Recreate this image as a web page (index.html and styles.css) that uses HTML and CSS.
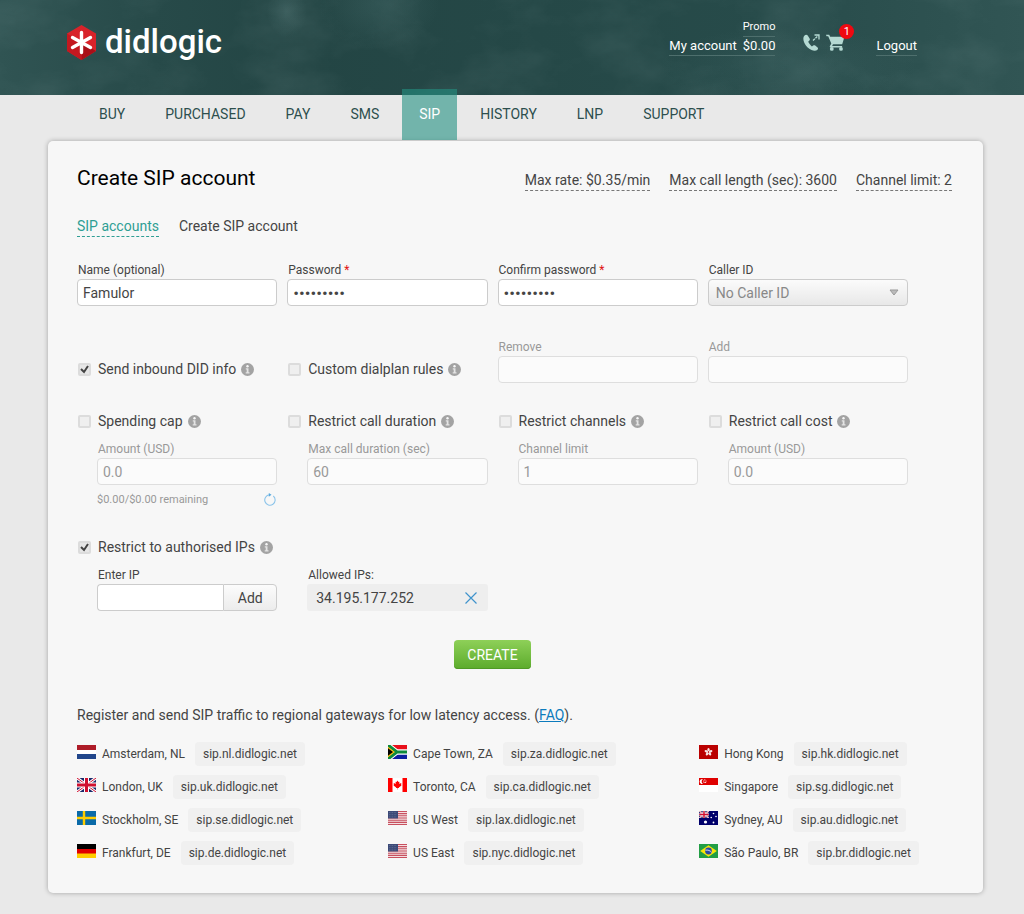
FILE: index.html
```html
<!DOCTYPE html>
<html lang="en">
<head>
    <meta charset="UTF-8">
    <meta name="viewport" content="width=device-width, initial-scale=1.0">
    <title>Create SIP account - didlogic</title>
    <link rel="stylesheet" href="styles.css">
</head>
<body>
    <!-- Shared icons -->
    <svg class="sprite" aria-hidden="true">
        <symbol id="info" viewBox="0 0 13 13">
            <circle cx="6.500" cy="6.500" r="6.500" fill="#a3a3a3"/>
            <circle cx="6.500" cy="3.200" r="1.200" fill="#f7f7f7"/>
            <path d="M4.800 5.300h2.700v4h1v1.200H4.700V9.300h1V6.500h-.9z" fill="#e4e4e4"/>
        </symbol>
        <symbol id="flag-uk" viewBox="0 0 19 14">
            <path d="M0 0h19v14H0z" fill="#1b2a6b"/>
            <path d="M0 0l19 14M19 0L0 14" stroke="#fff" stroke-width="3"/>
            <path d="M0 0l19 14M19 0L0 14" stroke="#d01030" stroke-width="1"/>
            <path d="M9.500 0v14M0 7h19" stroke="#fff" stroke-width="5"/>
            <path d="M9.500 0v14M0 7h19" stroke="#d01030" stroke-width="3"/>
        </symbol>
        <symbol id="flag-us" viewBox="0 0 19 14">
            <path d="M0 0h19v14H0z" fill="#f3dfe1"/>
            <path d="M0 .5h19M0 2.600h19M0 4.800h19M0 7h19M0 9.200h19M0 11.400h19M0 13.500h19" stroke="#c8505f" stroke-width="1.100"/>
            <path d="M0 0h10v7.500H0z" fill="#3c4a78"/>
            <path d="M1 1.500h8M1 3.700h8M1 5.900h8" stroke="#7d88aa" stroke-width=".6" stroke-dasharray=".8 .8"/>
        </symbol>
    </svg>

    <header class="header">
        <a href="#" class="logo">
            <svg width="31" height="35" viewBox="0 0 31 35" aria-hidden="true">
                <path d="M15.500 0L30 8.500v17.500L15.500 35 1 26V8.500z" fill="#d8232a"/>
                <path d="M1 8.500L15.500 17.500V35L1 26z" fill="#c31820"/>
                <path d="M30 26L15.500 17.500V35z" fill="#a90f18"/>
                <path d="M15.500 7.500v20M6.500 12.500l18 10M24.500 12.500l-18 10" stroke="#fff" stroke-width="3.400" stroke-linecap="round"/>
            </svg>
            <span>didlogic</span>
        </a>
        <div class="account">
            <a href="#" class="promo">Promo</a>
            <a href="#" class="balance"><span>My account</span> <span>$0.00</span></a>
        </div>
        <div class="header-icons">
            <a href="#" aria-label="Calls">
                <svg width="17" height="17" viewBox="0 0 17 17">
                    <path d="M1.300 1.700C0 3 0 6 1.400 9c1.500 3.100 4.100 5.700 7.100 7 2.300 1 4.600 1 6-.3.700-.7.700-1.500.1-2.100l-2.400-2.100c-.6-.5-1.400-.5-2 0l-1.300.9C7.500 11.300 6 9.700 5.200 7.800l1.200-1.200c.6-.6.600-1.400.2-2L4.700 1.600C3.900.4 2.400.6 1.300 1.700z" fill="#b5dad3"/>
                    <path d="M10 6.500l5.500-5" fill="none" stroke="#b5dad3" stroke-width="1.300" stroke-dasharray="2.500 .8"/>
                    <path d="M11.500 1H16v4.500" fill="none" stroke="#b5dad3" stroke-width="1.300"/>
                </svg>
            </a>
            <a href="#" class="cart" aria-label="Cart">
                <svg width="19" height="17" viewBox="0 0 19 17">
                    <path d="M0 .7h3.200l1 2H18.500l-2.300 7.500H7l-.9 1.700h10v1.500H4.200l-.5-1 1.600-2.900L2.200 2.200H.5z" fill="#b5dad3"/>
                    <circle cx="5.800" cy="14.900" r="1.900" fill="#b5dad3"/>
                    <circle cx="15" cy="14.900" r="1.900" fill="#b5dad3"/>
                </svg>
                <span class="badge">1</span>
            </a>
        </div>
        <a href="#" class="logout">Logout</a>
    </header>

    <nav class="nav">
        <a href="#">BUY</a>
        <a href="#">PURCHASED</a>
        <a href="#">PAY</a>
        <a href="#">SMS</a>
        <a href="#" class="active">SIP</a>
        <a href="#">HISTORY</a>
        <a href="#">LNP</a>
        <a href="#">SUPPORT</a>
    </nav>

    <main class="panel">
        <div class="panel-head">
            <h1>Create SIP account</h1>
            <div class="limits">
                <a href="#">Max rate: $0.35/min</a>
                <a href="#">Max call length (sec): 3600</a>
                <a href="#">Channel limit: 2</a>
            </div>
        </div>

        <div class="tabs">
            <a href="#">SIP accounts</a>
            <span>Create SIP account</span>
        </div>

        <form onsubmit="return false;">
            <!-- Account details -->
            <div class="row row-account">
                <div class="field">
                    <label for="name">Name (optional)</label>
                    <input type="text" id="name" value="Famulor">
                </div>
                <div class="field">
                    <label for="password">Password <span class="required">*</span></label>
                    <input type="password" id="password" value="123456789">
                </div>
                <div class="field">
                    <label for="confirm">Confirm password <span class="required">*</span></label>
                    <input type="password" id="confirm" value="123456789">
                </div>
                <div class="field">
                    <label for="caller">Caller ID</label>
                    <select id="caller"><option>No Caller ID</option></select>
                </div>
            </div>

            <!-- Dialplan -->
            <div class="row row-dialplan">
                <div class="check">
                    <input type="checkbox" id="did-info" checked>
                    <label for="did-info">Send inbound DID info</label>
                    <svg class="info"><use href="#info"/></svg>
                </div>
                <div class="check">
                    <input type="checkbox" id="dialplan">
                    <label for="dialplan">Custom dialplan rules</label>
                    <svg class="info"><use href="#info"/></svg>
                </div>
                <div class="field disabled">
                    <label for="remove">Remove</label>
                    <input type="text" id="remove" disabled>
                </div>
                <div class="field disabled">
                    <label for="add">Add</label>
                    <input type="text" id="add" disabled>
                </div>
            </div>

            <!-- Restrictions -->
            <div class="row row-limits">
                <div>
                    <div class="check">
                        <input type="checkbox" id="cap">
                        <label for="cap">Spending cap</label>
                        <svg class="info"><use href="#info"/></svg>
                    </div>
                    <div class="field indent disabled">
                        <label for="cap-amount">Amount (USD)</label>
                        <input type="text" id="cap-amount" value="0.0" disabled>
                    </div>
                    <div class="remaining">
                        <span>$0.00/$0.00 remaining</span>
                        <button type="button" class="icon-button" aria-label="Reset">
                            <svg width="13" height="13" viewBox="0 0 13 13">
                                <path d="M10.300 3A5.200 5.200 0 1 1 6.500 1.800" fill="none" stroke="#8cc4ea" stroke-width="1.100"/>
                                <path d="M5.800 0l2.700 1.800-2.700 2z" fill="#5aa9de"/>
                            </svg>
                        </button>
                    </div>
                </div>
                <div>
                    <div class="check">
                        <input type="checkbox" id="duration">
                        <label for="duration">Restrict call duration</label>
                        <svg class="info"><use href="#info"/></svg>
                    </div>
                    <div class="field indent disabled">
                        <label for="max-duration">Max call duration (sec)</label>
                        <input type="text" id="max-duration" value="60" disabled>
                    </div>
                </div>
                <div>
                    <div class="check">
                        <input type="checkbox" id="channels">
                        <label for="channels">Restrict channels</label>
                        <svg class="info"><use href="#info"/></svg>
                    </div>
                    <div class="field indent disabled">
                        <label for="channel-limit">Channel limit</label>
                        <input type="text" id="channel-limit" value="1" disabled>
                    </div>
                </div>
                <div>
                    <div class="check">
                        <input type="checkbox" id="cost">
                        <label for="cost">Restrict call cost</label>
                        <svg class="info"><use href="#info"/></svg>
                    </div>
                    <div class="field indent disabled">
                        <label for="cost-amount">Amount (USD)</label>
                        <input type="text" id="cost-amount" value="0.0" disabled>
                    </div>
                </div>
            </div>

            <!-- Authorised IPs -->
            <div class="check">
                <input type="checkbox" id="ips" checked>
                <label for="ips">Restrict to authorised IPs</label>
                <svg class="info"><use href="#info"/></svg>
            </div>
            <div class="row">
                <div class="field indent">
                    <label for="ip">Enter IP</label>
                    <div class="input-group">
                        <input type="text" id="ip">
                        <button type="button">Add</button>
                    </div>
                </div>
                <div class="field indent">
                    <span class="caption">Allowed IPs:</span>
                    <div class="ip">
                        <span>34.195.177.252</span>
                        <button type="button" class="icon-button" aria-label="Delete IP">
                            <svg width="12" height="12" viewBox="0 0 12 12">
                                <path d="M.5.5l11 11M11.500.5l-11 11" stroke="#3f93cc" stroke-width="1.200"/>
                            </svg>
                        </button>
                    </div>
                </div>
            </div>

            <button type="submit" class="create">CREATE</button>
        </form>

        <p class="note">Register and send SIP traffic to regional gateways for low latency access. (<a href="#">FAQ</a>).</p>

        <div class="gateways">
            <ul>
                <li>
                    <svg class="flag" viewBox="0 0 19 14"><path d="M0 0h19v14H0z" fill="#fff"/><path d="M0 0h19v5H0z" fill="#ae1c28"/><path d="M0 9h19v5H0z" fill="#21468b"/></svg>
                    Amsterdam, NL <span class="host">sip.nl.didlogic.net</span>
                </li>
                <li>
                    <svg class="flag"><use href="#flag-uk"/></svg>
                    London, UK <span class="host">sip.uk.didlogic.net</span>
                </li>
                <li>
                    <svg class="flag" viewBox="0 0 19 14"><path d="M0 0h19v14H0z" fill="#0a6aa8"/><path d="M7 0v14M0 7h19" stroke="#fecc00" stroke-width="2.400"/></svg>
                    Stockholm, SE <span class="host">sip.se.didlogic.net</span>
                </li>
                <li>
                    <svg class="flag" viewBox="0 0 19 14"><path d="M0 0h19v5H0z"/><path d="M0 5h19v5H0z" fill="#e00000"/><path d="M0 9.500h19V14H0z" fill="#ffce00"/></svg>
                    Frankfurt, DE <span class="host">sip.de.didlogic.net</span>
                </li>
            </ul>
            <ul>
                <li>
                    <svg class="flag" viewBox="0 0 19 14">
                        <path d="M0 0h19v14H0z" fill="#fff"/><path d="M3 0h16v4.500H9z" fill="#e8101a"/><path d="M3 14h16V9.500H9z" fill="#0b1fa0"/>
                        <path d="M0 0l9 7-9 7M9 7h10" fill="none" stroke="#fff" stroke-width="5"/>
                        <path d="M0 0l9 7-9 7M8 7h11" fill="none" stroke="#0c8a3c" stroke-width="3"/>
                        <path d="M0 1.800L6.800 7 0 12.200z" fill="#f5b800"/><path d="M0 3.200L5 7l-5 3.800z"/>
                    </svg>
                    Cape Town, ZA <span class="host">sip.za.didlogic.net</span>
                </li>
                <li>
                    <svg class="flag" viewBox="0 0 19 14">
                        <path d="M0 0h19v14H0z" fill="#fff"/><path d="M0 0h4.500v14H0zM14.500 0H19v14h-4.500z" fill="#f00"/>
                        <path d="M9.500 2.500l1 1.600 1-.3-.4 2.300 1-.8 1.400.2-.4 1.400.4.500-2.700 2 .2.700-1.300-.1v1.500h-.400V10l-1.300.1.200-.7-2.700-2 .4-.5-.4-1.400 1.400-.2 1 .8-.4-2.300 1 .3z" fill="#f00"/>
                    </svg>
                    Toronto, CA <span class="host">sip.ca.didlogic.net</span>
                </li>
                <li>
                    <svg class="flag"><use href="#flag-us"/></svg>
                    US West <span class="host">sip.lax.didlogic.net</span>
                </li>
                <li>
                    <svg class="flag"><use href="#flag-us"/></svg>
                    US East <span class="host">sip.nyc.didlogic.net</span>
                </li>
            </ul>
            <ul>
                <li>
                    <svg class="flag" viewBox="0 0 19 14">
                        <path d="M0 0h19v14H0z" fill="#ba0000"/>
                        <g fill="#fff" opacity=".9"><ellipse id="petal" cx="9.500" cy="4.800" rx="1.200" ry="1.900"/><use href="#petal" transform="rotate(72 9.500 7)"/><use href="#petal" transform="rotate(144 9.500 7)"/><use href="#petal" transform="rotate(216 9.500 7)"/><use href="#petal" transform="rotate(288 9.500 7)"/></g>
                        <circle cx="9.500" cy="7" r=".7" fill="#ba0000"/>
                    </svg>
                    Hong Kong <span class="host">sip.hk.didlogic.net</span>
                </li>
                <li>
                    <svg class="flag" viewBox="0 0 19 14">
                        <path d="M0 0h19v14H0z" fill="#fff"/><path d="M0 0h19v7H0z" fill="#df0000"/>
                        <path d="M4 1a2.600 2.600 0 1 0 0 5 3 3 0 0 1 0-5z" fill="#fff"/>
                        <g fill="#fff"><circle cx="5.800" cy="1.800" r=".6"/><circle cx="4.700" cy="3" r=".6"/><circle cx="7" cy="3" r=".6"/><circle cx="5.100" cy="4.500" r=".6"/><circle cx="6.600" cy="4.500" r=".6"/></g>
                    </svg>
                    Singapore <span class="host">sip.sg.didlogic.net</span>
                </li>
                <li>
                    <svg class="flag" viewBox="0 0 19 14">
                        <path d="M0 0h19v14H0z" fill="#00006b"/><use href="#flag-uk" width="10" height="7"/>
                        <g fill="#fff"><circle cx="6.500" cy="11" r="1.600"/><circle cx="14.500" cy="2.500" r=".8"/><circle cx="12.200" cy="6.500" r=".8"/><circle cx="17" cy="5.500" r=".8"/><circle cx="14.500" cy="11.500" r=".9"/></g>
                    </svg>
                    Sydney, AU <span class="host">sip.au.didlogic.net</span>
                </li>
                <li>
                    <svg class="flag" viewBox="0 0 19 14">
                        <path d="M0 0h19v14H0z" fill="#229e45"/><path d="M9.500 1.300L17.800 7l-8.300 5.700L1.200 7z" fill="#f8e509"/>
                        <circle cx="9.500" cy="7" r="3.400" fill="#2b49a3"/><path d="M6.400 6.200c2.400-.5 4.800.4 6.200 2.100" fill="none" stroke="#fff" stroke-width=".8"/>
                    </svg>
                    São Paulo, BR <span class="host">sip.br.didlogic.net</span>
                </li>
            </ul>
        </div>
    </main>
</body>
</html>
```
FILE: styles.css
```css
* {
    box-sizing: border-box;
}
body {
    margin: 0;
    padding-bottom: 21px;
    background-color: #e9e9e9;
    color: #444;
    font-family: Roboto, Arial, sans-serif;
    font-size: 14px;
    line-height: 20px;
}
a {
    color: inherit;
    text-decoration: none;
}
input, select, button {
    font-family: inherit;
    font-size: 14px;
    color: #444;
}
button {
    cursor: pointer;
}
.sprite {
    position: absolute;
    width: 0;
    height: 0;
}

/* Header */
.header {
    display: flex;
    align-items: flex-start;
    height: 95px;
    padding: 18px 107px 0 66px;
    /* chalkboard: fine noise over a few smudges */
    background:
        url("data:image/svg+xml,%3Csvg xmlns='http://www.w3.org/2000/svg' width='1024' height='95'%3E%3Cfilter id='n' x='0' y='0' width='100%25' height='100%25'%3E%3CfeTurbulence type='fractalNoise' baseFrequency='.012 .02' numOctaves='5' seed='4'/%3E%3CfeColorMatrix values='0 0 0 0 .6 0 0 0 0 .75 0 0 0 0 .75 1.2 0 0 0 -.5'/%3E%3C/filter%3E%3Crect width='1024' height='95' filter='url(%23n)' opacity='.14'/%3E%3C/svg%3E"),
        radial-gradient(ellipse 20px 26px at 28% 12%, rgba(130, 165, 165, 0.2), transparent),
        radial-gradient(ellipse 60px 45px at 37% 5%, rgba(110, 150, 150, 0.18), transparent),
        radial-gradient(ellipse 130px 40px at 77% 70%, rgba(110, 150, 150, 0.12), transparent),
        linear-gradient(90deg, #305453, #274a49 15%, #234544 30%, #274b4a 75%, #315554);
    color: #fff;
}
.logo {
    display: flex;
    align-items: center;
    gap: 8px;
    margin-right: auto;
    padding-top: 4px;
    font-size: 33px;
    font-weight: 500;
    line-height: 40px;
}
.account {
    display: flex;
    flex-direction: column;
    align-items: flex-end;
}
.account a, .logout {
    border-bottom: 1px solid #4e6f6d;
}
.promo {
    font-size: 11px;
    line-height: 18px;
}
.balance, .logout {
    font-size: 13px;
    line-height: 18px;
}
.balance {
    display: flex;
    gap: 6px;
}
.header-icons {
    display: flex;
    gap: 6px;
    margin: 16px 31px 0 28px;
}
.header-icons svg {
    display: block;
}
.cart {
    position: relative;
}
.badge {
    position: absolute;
    top: -10px;
    right: -9px;
    width: 15px;
    height: 15px;
    border-radius: 50%;
    background-color: #f00810;
    font-size: 11px;
    line-height: 15px;
    text-align: center;
}
.logout {
    margin-top: 19px;
}

/* Navigation */
.nav {
    display: flex;
    gap: 6px;
    margin-top: -6px;
    padding-left: 82px;
    color: #2d4f4e;
}
.nav a {
    padding: 15px 17px 16px;
}
.nav .active {
    background-color: rgba(35, 145, 130, 0.6);
    color: #fff;
}

/* Content panel */
.panel {
    margin: 1px 41px 0 48px;
    padding: 24px 31px 28px 29px;
    border-radius: 5px;
    background-color: #f7f7f7;
    box-shadow: 0 0 5px rgba(0, 0, 0, 0.3);
}
.panel-head {
    display: flex;
    justify-content: space-between;
    align-items: flex-end;
    margin-bottom: 25px;
}
h1 {
    margin: 0;
    color: #000;
    font-size: 21px;
    font-weight: 400;
    line-height: 26px;
}
.limits {
    display: flex;
    gap: 19px;
}
.limits a {
    border-bottom: 1px dashed #777;
}
.tabs {
    display: flex;
    gap: 20px;
    margin-bottom: 24px;
}
.tabs a {
    border-bottom: 1px dashed #2e9e94;
    color: #2e9e94;
}

/* Form */
form {
    padding-right: 44px;
}
.row {
    display: grid;
    grid-template-columns: repeat(4, 1fr);
    gap: 10px;
}
.row-account {
    margin-bottom: 23px;
}
.row-dialplan {
    align-items: end;
    margin-bottom: 28px;
}
.row-limits {
    margin-bottom: 28px;
}
.field label, .caption {
    display: block;
    padding-left: 1px;
    font-size: 12px;
    line-height: 18px;
}
.indent {
    padding-left: 20px;
}
.required {
    color: #e01010;
}
.field input, .field select {
    display: block;
    width: 100%;
    height: 27px;
    padding: 0 5px;
    border: 1px solid #ccc;
    border-radius: 4px;
    background-color: #fff;
}
.field input[type="password"] {
    font-size: 17px;
}
.field select {
    appearance: none;
    padding: 0 7px;
    background: url("data:image/svg+xml,%3Csvg xmlns='http://www.w3.org/2000/svg' width='10' height='7'%3E%3Cpath d='M1 1h8L5 6z' fill='%23bbb' stroke='%23999'/%3E%3C/svg%3E") no-repeat right 8px center, linear-gradient(#fbfbfb, #e8e8e8);
    color: #888;
}
.field.disabled label {
    color: #999;
}
.field.disabled input {
    border-color: #dedede;
    background-color: #fbfbfb;
    color: #999;
}
.check {
    display: flex;
    align-items: center;
    height: 20px;
    padding-left: 1px;
}
.row-dialplan .check {
    margin-bottom: 4px;
}
.check input {
    appearance: none;
    width: 13px;
    height: 13px;
    margin: 0 7px 0 0;
    border: 2px solid #dcdcdc;
    border-radius: 2px;
    background-color: #efefef;
}
.check input:checked {
    background: #e6e6e6 url("data:image/svg+xml,%3Csvg xmlns='http://www.w3.org/2000/svg' width='9' height='9'%3E%3Cpath d='M1 4l3 3 4-6' fill='none' stroke='%23444' stroke-width='2'/%3E%3C/svg%3E") no-repeat center;
}
.info {
    width: 13px;
    height: 13px;
    margin-left: 5px;
}
.check + .field,
.check + .row {
    margin-top: 9px;
}
.remaining {
    display: flex;
    justify-content: space-between;
    align-items: center;
    height: 24px;
    padding: 5px 1px 0 20px;
    color: #999;
    font-size: 11px;
}
.icon-button {
    display: flex;
    padding: 0;
    border: 0;
    background: none;
}
.input-group {
    display: flex;
}
.input-group input {
    flex: 1;
    min-width: 0;
    border-right: 0;
    border-radius: 4px 0 0 4px;
}
.input-group button {
    width: 54px;
    border: 1px solid #ccc;
    border-radius: 0 4px 4px 0;
    background: linear-gradient(#fcfcfc, #ececec);
}
.ip {
    display: flex;
    justify-content: space-between;
    align-items: center;
    height: 27px;
    padding: 0 11px 0 9px;
    border-radius: 3px;
    background-color: #eee;
}
.create {
    display: block;
    width: 77px;
    height: 29px;
    margin: 29px auto 36px;
    padding: 0;
    border: 0;
    border-radius: 4px;
    background: linear-gradient(#8ed058, #5cab2c);
    box-shadow: inset 0 -1px 0 #4f9a25;
    color: #fff;
}

/* Gateways */
.note {
    margin: 0 0 17px;
}
.note a {
    color: #0c7bbd;
    text-decoration: underline;
}
.gateways {
    display: grid;
    grid-template-columns: 16fr 16fr 13fr;
    font-size: 12px;
}
.gateways ul {
    display: flex;
    flex-direction: column;
    gap: 9px;
    margin: 0;
    padding: 0;
    list-style: none;
}
.gateways li {
    display: flex;
    align-items: center;
}
.flag {
    width: 19px;
    height: 14px;
    margin: 0 6px 4px 0;
}
.host {
    margin-left: 10px;
    padding: 2px 8px;
    border-radius: 4px;
    background-color: #f0f0f0;
}
```
